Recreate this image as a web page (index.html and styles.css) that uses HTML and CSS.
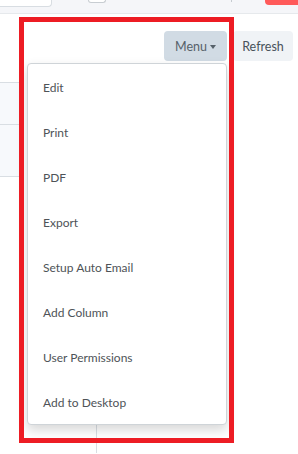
FILE: index.html
```html
<!DOCTYPE html>
<html>
<head>
<meta charset="utf-8">
<link rel="stylesheet" href="styles.css">
</head>
<body>
<div class="topbar">
  <div class="search"></div>
  <div class="check"></div>
  <div class="tick"></div>
  <div class="primary"></div>
</div>
<div class="page-head">
  <button class="btn btn-menu">Menu <span class="caret"></span></button>
  <button class="btn btn-refresh">Refresh</button>
</div>
<div class="layout">
  <div class="sidebar">
    <div class="srow srow-a"></div>
    <div class="srow srow-b"></div>
  </div>
  <div class="list">
    <div class="col"></div>
  </div>
</div>
<ul class="dropdown">
  <li>Edit</li>
  <li>Print</li>
  <li>PDF</li>
  <li>Export</li>
  <li>Setup Auto Email</li>
  <li>Add Column</li>
  <li>User Permissions</li>
  <li>Add to Desktop</li>
</ul>
<div class="highlight"></div>
</body>
</html>
```
FILE: styles.css
```css
* { box-sizing: border-box; }
html, body { margin: 0; padding: 0; }
body {
  width: 298px;
  height: 454px;
  overflow: hidden;
  background: #fff;
  font-family: Lato, "Noto Sans", sans-serif;
  position: relative;
}
.topbar {
  height: 14px;
  background: #f5f6f9;
  border-bottom: 1px solid #e6e9ec;
  position: relative;
  display: flex;
  align-items: flex-start;
}
.search {
  width: 56px;
  height: 7px;
  background: #fff;
  border: 1px solid #d8dde2;
  border-top: none;
  border-radius: 0 0 4px 4px;
  margin-left: -4px;
}
.check {
  width: 18px;
  height: 3px;
  margin-left: 36px;
  background: #fff;
  border: 1px solid #c8cdd2;
  border-top: none;
  border-radius: 0 0 3px 3px;
}
.tick {
  width: 1px;
  height: 2px;
  background: #c6cbd0;
  margin-left: 125px;
}
.primary {
  width: 33px;
  height: 5px;
  background: #ff5a5a;
  border-radius: 0 0 0 4px;
  margin-left: auto;
}
.page-head {
  display: flex;
  justify-content: flex-end;
  gap: 6px;
  padding: 17px 5px 0 0;
  height: 47px;
}
.btn {
  height: 30px;
  border: none;
  border-radius: 4px;
  font-family: Lato, "Noto Sans", sans-serif;
  font-size: 12.5px;
  padding: 0;
  display: flex;
  align-items: center;
  justify-content: center;
}
.btn-menu {
  width: 63px;
  background: #d1dbe4;
  color: #56616a;
  gap: 3px;
}
.caret {
  width: 0;
  height: 0;
  border-left: 3.5px solid transparent;
  border-right: 3.5px solid transparent;
  border-top: 4px solid #56616a;
  margin-top: 1px;
}
.btn-refresh {
  width: 60px;
  background: #f0f3f6;
  color: #48525a;
}
.layout {
  display: flex;
  margin-top: 21px;
  height: 371px;
}
.sidebar {
  width: 19px;
  flex: none;
}
.srow {
  background: #f7f9fc;
  border-top: 1px solid #d9dee3;
}
.srow-a { height: 42px; }
.srow-b { height: 53px; border-bottom: 1px solid #d9dee3; }
.list {
  flex: 1;
  display: flex;
}
.col {
  width: 78px;
  border-right: 1px solid #d9dee3;
}
.dropdown {
  position: absolute;
  left: 27px;
  top: 63px;
  width: 200px;
  margin: 0;
  padding: 0;
  list-style: none;
  background: #fff;
  border: 1px solid #cfd4d8;
  border-radius: 4px;
  box-shadow: 0 5px 12px rgba(0, 0, 0, 0.16);
}
.dropdown li {
  height: 45px;
  padding: 1px 0 0 15px;
  display: flex;
  align-items: center;
  font-size: 12px;
  color: #4e5357;
}
.highlight {
  position: absolute;
  left: 19px;
  top: 17px;
  width: 215px;
  height: 426px;
  border: 5px solid #ed1c24;
}
```
